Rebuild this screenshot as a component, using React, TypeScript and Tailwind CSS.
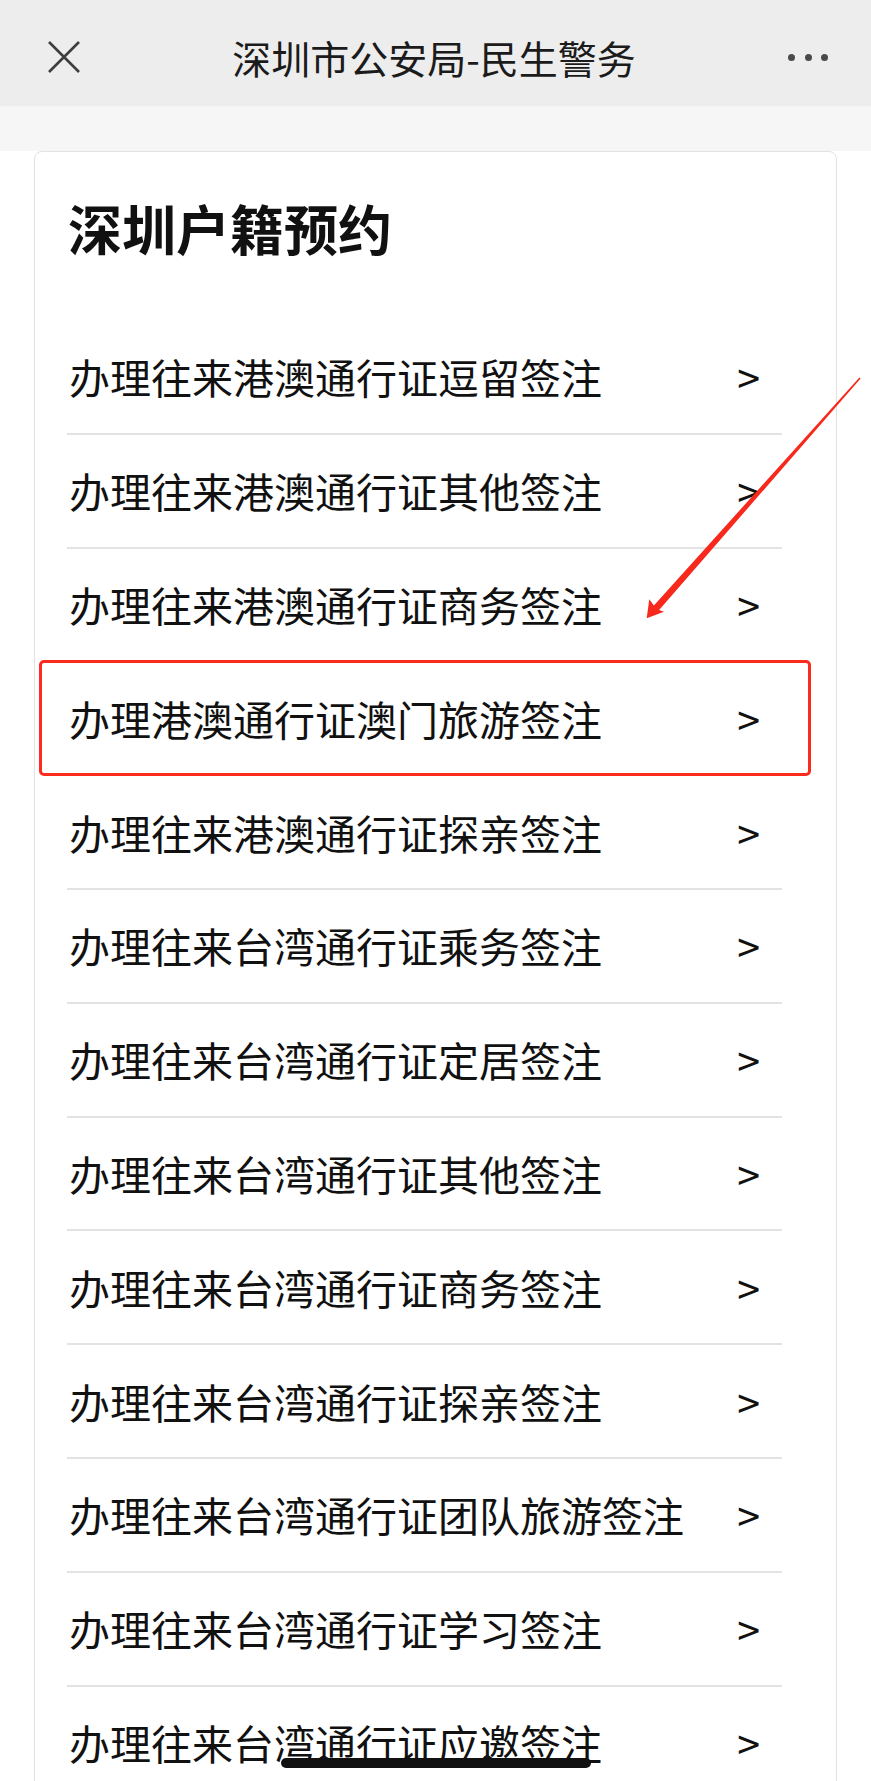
import React from "react";

const items = [
  "办理往来港澳通行证逗留签注",
  "办理往来港澳通行证其他签注",
  "办理往来港澳通行证商务签注",
  "办理港澳通行证澳门旅游签注",
  "办理往来港澳通行证探亲签注",
  "办理往来台湾通行证乘务签注",
  "办理往来台湾通行证定居签注",
  "办理往来台湾通行证其他签注",
  "办理往来台湾通行证商务签注",
  "办理往来台湾通行证探亲签注",
  "办理往来台湾通行证团队旅游签注",
  "办理往来台湾通行证学习签注",
  "办理往来台湾通行证应邀签注",
];

export default function App() {
  return (
    <div className="relative h-[1781px] w-[871px] overflow-hidden bg-white font-['Noto_Sans_CJK_SC','Noto_Sans',sans-serif] text-[#111]">
      {/* Header */}
      <div className="flex h-[106px] items-center bg-[#ededed] pl-[48px] pr-[43px] pt-[8px]">
        <svg width="32" height="32" viewBox="0 0 32 32" className="shrink-0">
          <path d="M1 1 L31 31 M31 1 L1 31" stroke="#3d3d3d" strokeWidth="2.6" fill="none" />
        </svg>
        <div className="flex-1 text-center text-[39px] leading-none text-[#1b1b1b]">
          深圳市公安局-民生警务
        </div>
        <div className="flex w-[40px] shrink-0 items-center justify-between">
          <span className="block h-[7px] w-[7px] rounded-full bg-[#4a4a4a]" />
          <span className="block h-[7px] w-[7px] rounded-full bg-[#4a4a4a]" />
          <span className="block h-[7px] w-[7px] rounded-full bg-[#4a4a4a]" />
        </div>
      </div>
      <div className="h-[45px] bg-[#f6f6f6]" />

      {/* Card */}
      <div className="mx-[34px] h-[1700px] rounded-t-[8px] border border-[#e2e2e2] bg-white">
        <div className="pl-[33px] pt-[49px] text-[54px] font-bold leading-none text-[#111]">
          深圳户籍预约
        </div>
        <div className="mt-[66px] pl-[32px] pr-[54px]">
          {items.map((t, i) => (
            <div
              key={i}
              className="relative flex h-[113.8px] items-center border-b-2 border-[#e3e3e3]"
            >
              <span className="pl-[2px] text-[41px] leading-none text-[#111]">{t}</span>
              <span className="ml-auto mr-[22px] text-[41px] leading-none text-[#111]">&gt;</span>
              {i === 3 && (
                <div className="absolute -bottom-[2px] -left-[28px] -right-[29px] -top-[2px] rounded-[5px] border-[3px] border-[#fb2b1e]" />
              )}
            </div>
          ))}
        </div>
      </div>

      {/* Red annotation arrow */}
      <svg
        className="pointer-events-none absolute left-0 top-0"
        width="871"
        height="1781"
        viewBox="0 0 871 1781"
      >
        <polygon
          points="860.6,378.6 659.1,610.1 664,611.7 646.7,618.3 649.3,599.3 653.9,605.5 859.4,377.4"
          fill="#f7281c"
        />
      </svg>

      {/* Home indicator */}
      <div className="absolute left-[281px] top-[1758px] h-[10px] w-[310px] rounded-full bg-[#111]" />
    </div>
  );
}
